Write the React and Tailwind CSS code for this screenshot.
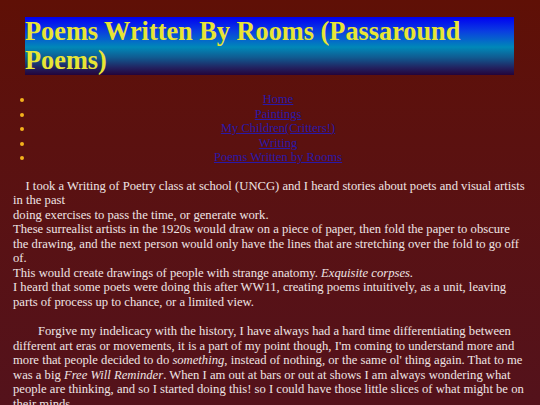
export default function App() {
  const links = ["Home", "Paintings", "My Children(Critters!)", "Writing", "Poems Written by Rooms"];
  return (
    <div className="min-h-[405px] w-[540px] bg-gradient-to-b from-[#5f1006] to-[#53121c] pt-[17px] pb-4 text-[#efe4e4] font-['Liberation_Serif',serif]">
      <h1 className="ml-[25px] w-[489px] bg-[linear-gradient(to_bottom,#0000f2_0%,#0a3fe0_25%,#0088b8_52%,#105a90_70%,#22205e_88%,#24043a_100%)] text-[26.3px] font-bold leading-[29px] text-[#e8e534]">
        Poems Written By Rooms (Passaround Poems)
      </h1>
      <ul className="mt-[17px] list-disc pl-[34px] pr-[18px] text-center text-[12.5px] leading-[14.5px] marker:text-[#f4b21c]">
        {links.map((l) => (
          <li key={l}>
            <a href="#" className="text-[#2a18a8] underline">{l}</a>
          </li>
        ))}
      </ul>
      <div className="mt-[14px] pl-[13px] pr-[13px] text-[12.65px] leading-[14.55px]">
        <p>
          <span className="inline-block w-[12.5px]"></span>I took a Writing of Poetry class at school (UNCG) and I heard stories about poets and visual artists in the past
          <br />
          doing exercises to pass the time, or generate work.
          <br />
          These surrealist artists in the 1920s would draw on a piece of paper, then fold the paper to obscure the drawing, and the next person would only have the lines that are stretching over the fold to go off of.
          <br />
          This would create drawings of people with strange anatomy. <i>Exquisite corpses.</i>
          <br />
          I heard that some poets were doing this after WW11, creating poems intuitively, as a unit, leaving parts of process up to chance, or a limited view.
        </p>
        <p className="mt-[14.55px]">
          <span className="inline-block w-[25px]"></span>Forgive my indelicacy with the history, I have always had a hard time differentiating between different art eras or movements, it is a part of my point though, I'm coming to understand more and more that people decided to do <i>something</i>, instead of nothing, or the same ol' thing again. That to me was a big <i>Free Will Reminder</i>. When I am out at bars or out at shows I am always wondering what people are thinking, and so I started doing this! so I could have those little slices of what might be on their minds.
        </p>
      </div>
    </div>
  );
}
